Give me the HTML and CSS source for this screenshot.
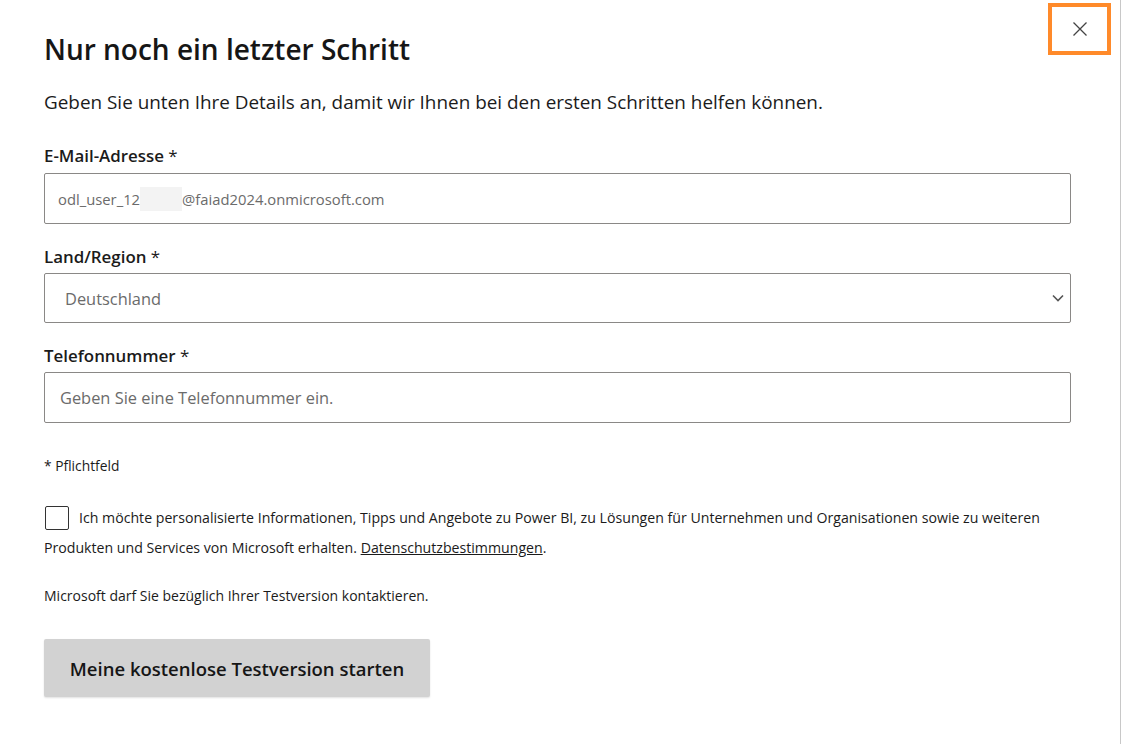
FILE: index.html
```html
<!DOCTYPE html>
<html lang="de">
<head>
<meta charset="utf-8">
<title>Nur noch ein letzter Schritt</title>
<link rel="stylesheet" href="styles.css">
</head>
<body>
<div class="dialog">
  <button class="close" aria-label="Schließen">
    <svg width="16" height="16" viewBox="0 0 16 16"><path d="M1.5 1.5 L14.5 14.5 M14.5 1.5 L1.5 14.5" stroke="#444" stroke-width="1.3" fill="none"/></svg>
  </button>
  <div class="content">
    <h1 class="title">Nur noch ein letzter Schritt</h1>
    <p class="subtitle">Geben Sie unten Ihre Details an, damit wir Ihnen bei den ersten Schritten helfen können.</p>

    <div class="field field-email">
      <label class="label">E-Mail-Adresse <span class="req">*</span></label>
      <div class="input email"><span>odl_user_12</span><span class="mask"></span><span>@faiad2024.onmicrosoft.com</span></div>
    </div>

    <div class="field field-country">
      <label class="label">Land/Region <span class="req">*</span></label>
      <div class="input select"><span>Deutschland</span>
        <svg class="chev" width="12" height="8" viewBox="0 0 12 8"><path d="M1 1.5 L6 6.5 L11 1.5" stroke="#555" stroke-width="1.6" fill="none"/></svg>
      </div>
    </div>

    <div class="field field-phone">
      <label class="label">Telefonnummer <span class="req">*</span></label>
      <div class="input phone"><span>Geben Sie eine Telefonnummer ein.</span></div>
    </div>

    <p class="note">* Pflichtfeld</p>

    <div class="consent">
      <span class="box"></span>
      <p class="consent-text">Ich möchte personalisierte Informationen, Tipps und Angebote zu Power BI, zu Lösungen für Unternehmen und Organisationen sowie zu weiteren Produkten und Services von Microsoft erhalten. <a href="#">Datenschutzbestimmungen</a>.</p>
    </div>

    <p class="contact">Microsoft darf Sie bezüglich Ihrer Testversion kontaktieren.</p>

    <button class="submit">Meine kostenlose Testversion starten</button>
  </div>
</div>
</body>
</html>
```

FILE: styles.css
```css
html, body {
  margin: 0;
  padding: 0;
  background: #ffffff;
}
body {
  font-family: "Open Sans", "Noto Sans", sans-serif;
  color: #1b1b1b;
}
.dialog {
  position: relative;
  width: 1121px;
  height: 744px;
  border-right: 1px solid #c8c8c8;
  box-sizing: border-box;
  overflow: hidden;
}
.close {
  position: absolute;
  top: 3px;
  left: 1048px;
  width: 63px;
  height: 52px;
  border: 4px solid #ff8a2a;
  background: #fff;
  display: flex;
  align-items: center;
  justify-content: center;
  padding: 0;
  box-sizing: border-box;
}
.content {
  padding: 31px 0 0 44px;
  width: 1027px;
}
.title {
  margin: 0;
  font-size: 28px;
  font-weight: 600;
  line-height: 36px;
  color: #161616;
}
.subtitle {
  margin: 23px 0 0;
  font-size: 18.9px;
  line-height: 24px;
  color: #1b1b1b;
}
.field-email {
  margin-top: 31px;
}
.field-country {
  margin-top: 22px;
}
.field-phone {
  margin-top: 22px;
}
.label {
  display: block;
  font-size: 16.9px;
  font-weight: 600;
  line-height: 22px;
  color: #1b1b1b;
  margin-bottom: 5px;
}
.field-email .label {
  margin-bottom: 6px;
}
.req {
  font-weight: 400;
}
.input {
  height: 51px;
  border: 1px solid #8a8886;
  border-radius: 2px;
  box-sizing: border-box;
  display: flex;
  align-items: center;
  color: #6b6b6b;
}
.email {
  padding-left: 13px;
  font-size: 14.8px;
}
.mask {
  display: inline-block;
  width: 42px;
  height: 24px;
  background: #f3f3f3;
}
.select {
  height: 50px;
  padding: 0 6px 0 20px;
  font-size: 16.4px;
  justify-content: space-between;
}
.phone {
  padding-left: 15px;
  font-size: 16.4px;
}
.note {
  margin: 34px 0 0;
  font-size: 13.8px;
  line-height: 18px;
}
.consent {
  margin-top: 28px;
  position: relative;
}
.box {
  position: absolute;
  left: 1px;
  top: 3px;
  width: 24px;
  height: 24px;
  border: 1.5px solid #333;
  border-radius: 2px;
  box-sizing: border-box;
}
.consent-text {
  margin: 0;
  font-size: 14.15px;
  line-height: 30px;
  text-indent: 35px;
  color: #1b1b1b;
}
.consent-text a {
  color: #1b1b1b;
  text-decoration: underline;
}
.contact {
  margin: 23px 0 0;
  font-size: 14px;
  line-height: 20px;
}
.submit {
  display: block;
  margin-top: 33px;
  width: 386px;
  height: 58px;
  border: none;
  border-radius: 2px;
  background: #d2d2d2;
  font-family: inherit;
  font-size: 18.5px;
  font-weight: 600;
  color: #161616;
  box-shadow: 0 1px 2px rgba(0,0,0,0.12);
}
```
